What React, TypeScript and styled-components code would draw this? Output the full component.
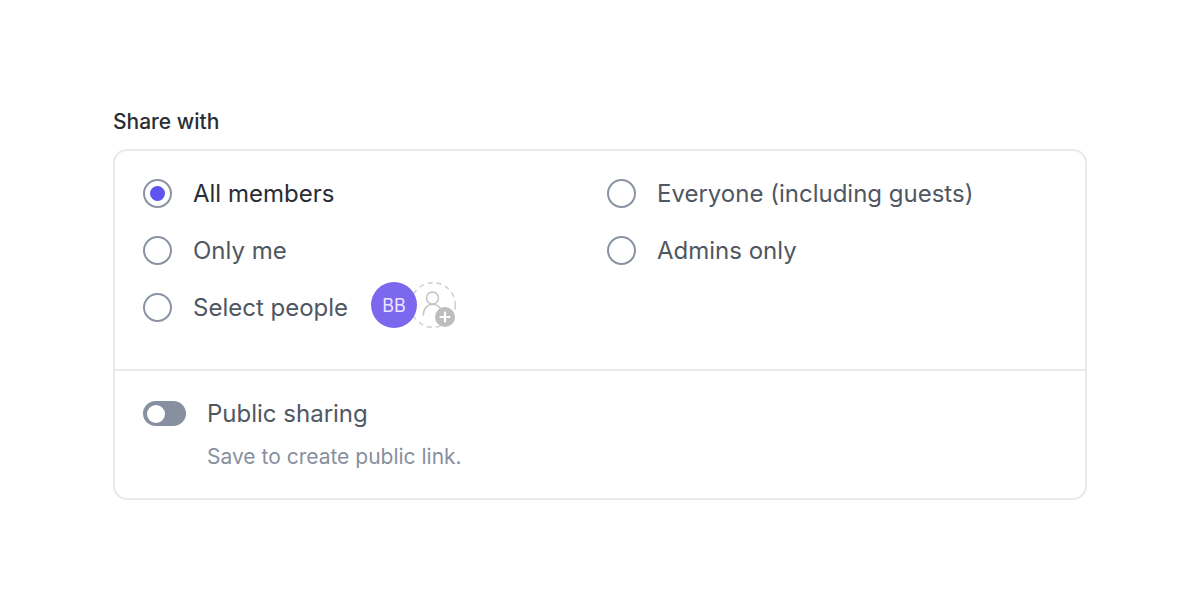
import { useState } from "react";
import styled, { createGlobalStyle } from "styled-components";

const GlobalStyle = createGlobalStyle`
  * {
    box-sizing: border-box;
  }
  body {
    margin: 0;
    background: #ffffff;
    font-family: Inter, "Liberation Sans", sans-serif;
    color: #4f5762;
  }
`;

const Page = styled.main`
  padding: 107px 113px 0;
`;

const Group = styled.fieldset`
  margin: 0;
  padding: 0;
  border: 0;
  min-width: 0;
`;

const Title = styled.legend`
  padding: 0;
  margin-bottom: 12px;
  font-size: 21px;
  line-height: 30px;
  font-weight: 500;
  color: #292d34;
`;

const Card = styled.div`
  border: 2px solid #e8eaed;
  border-radius: 14px;
`;

const Options = styled.div`
  display: grid;
  grid-template-columns: 1fr 1fr;
  column-gap: 14px;
  padding: 14px 28px 33px;
`;

const OptionRow = styled.div`
  display: flex;
  align-items: center;
  height: 57px;
`;

const OptionLabel = styled.label`
  display: flex;
  align-items: center;
  gap: 21px;
  font-size: 24px;
  line-height: 29px;
  white-space: nowrap;
  cursor: pointer;

  &:has(input:checked) {
    color: #292d34;
  }
`;

const Radio = styled.input`
  appearance: none;
  display: grid;
  place-items: center;
  flex: none;
  width: 29px;
  height: 29px;
  margin: 0;
  border: 2px solid #8a93a1;
  border-radius: 50%;
  cursor: pointer;

  &:checked::before {
    content: "";
    width: 15px;
    height: 15px;
    border-radius: 50%;
    background: #5f55ee;
  }
`;

const People = styled.div`
  display: flex;
  margin: 0 0 5px 23px;
`;

const Avatar = styled.span`
  z-index: 1;
  display: grid;
  place-items: center;
  width: 46px;
  height: 46px;
  border-radius: 50%;
  background: #7b68ee;
  color: #e9e5ff;
  font-size: 18px;
`;

const AddPerson = styled.button`
  width: 46px;
  height: 46px;
  margin-left: -7px;
  padding: 0;
  border: 0;
  background: none;
  cursor: pointer;

  svg {
    display: block;
  }
`;

const PublicSection = styled.div`
  display: grid;
  grid-template-columns: 43px 1fr;
  column-gap: 21px;
  row-gap: 14px;
  align-items: center;
  padding: 28px 28px 26px;
  border-top: 2px solid #e8eaed;
`;

const Toggle = styled.input`
  appearance: none;
  display: flex;
  align-items: center;
  width: 43px;
  height: 25px;
  margin: 0;
  padding: 0 4px;
  border-radius: 13px;
  background: #87909e;
  cursor: pointer;

  &::before {
    content: "";
    width: 18px;
    height: 18px;
    border-radius: 50%;
    background: #ffffff;
  }

  &:checked {
    justify-content: flex-end;
    background: #5f55ee;
  }
`;

const ToggleLabel = styled.label`
  font-size: 24px;
  line-height: 29px;
  cursor: pointer;
`;

const Hint = styled.p`
  grid-column: 2;
  margin: 0;
  font-size: 21px;
  line-height: 30px;
  color: #87909e;
`;

function AddPersonIcon() {
  return (
    <svg width="46" height="46" viewBox="0 0 46 46" fill="none" aria-hidden="true">
      <circle cx="23" cy="23" r="22.3" stroke="#cdcdcd" strokeWidth="1.4" strokeDasharray="5 4" />
      <circle cx="22.5" cy="16" r="6" stroke="#c0c0c0" strokeWidth="1.4" />
      <path d="M13.2 33.5C13.2 27 17 22.4 22.5 22.4C26 22.4 28.5 23.8 30.5 26.5" stroke="#c0c0c0" strokeWidth="1.4" />
      <circle cx="35" cy="35" r="10" fill="#bdbdbd" />
      <path d="M35 30.5v9M30.500 35h9" stroke="#ffffff" strokeWidth="2.2" strokeLinecap="round" />
    </svg>
  );
}

const audiences = ["All members", "Everyone (including guests)", "Only me", "Admins only", "Select people"];

export default function App() {
  const [audience, setAudience] = useState(audiences[0]);
  const [isPublic, setIsPublic] = useState(false);

  return (
    <Page>
      <GlobalStyle />
      <Group>
        <Title>Share with</Title>
        <Card>
          <Options>
            {audiences.map((name) => (
              <OptionRow key={name}>
                <OptionLabel>
                  <Radio type="radio" name="audience" checked={audience === name} onChange={() => setAudience(name)} />
                  {name}
                </OptionLabel>
                {name === "Select people" && (
                  <People>
                    <Avatar>BB</Avatar>
                    <AddPerson type="button" aria-label="Add people">
                      <AddPersonIcon />
                    </AddPerson>
                  </People>
                )}
              </OptionRow>
            ))}
          </Options>
          <PublicSection>
            <Toggle
              type="checkbox"
              role="switch"
              id="public-sharing"
              checked={isPublic}
              onChange={() => setIsPublic(!isPublic)}
            />
            <ToggleLabel htmlFor="public-sharing">Public sharing</ToggleLabel>
            <Hint>Save to create public link.</Hint>
          </PublicSection>
        </Card>
      </Group>
    </Page>
  );
}
